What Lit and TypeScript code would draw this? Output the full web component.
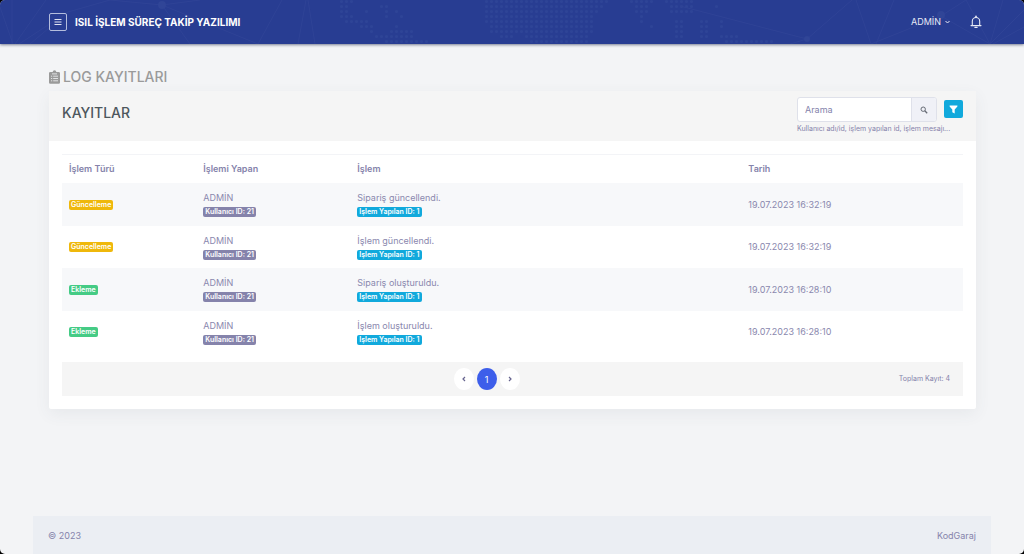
import { LitElement, html, css, svg } from "lit";
import { customElement, property, state } from "lit/decorators.js";
import { classMap } from "lit/directives/class-map.js";

interface LogEntry {
  kind: "update" | "insert";
  user: string;
  userId: number;
  message: string;
  targetId: number;
  date: string;
}

const ENTRIES: LogEntry[] = [
  { kind: "update", user: "ADMİN", userId: 21, message: "Sipariş güncellendi.", targetId: 1, date: "19.07.2023 16:32:19" },
  { kind: "update", user: "ADMİN", userId: 21, message: "İşlem güncellendi.", targetId: 1, date: "19.07.2023 16:32:19" },
  { kind: "insert", user: "ADMİN", userId: 21, message: "Sipariş oluşturuldu.", targetId: 1, date: "19.07.2023 16:28:10" },
  { kind: "insert", user: "ADMİN", userId: 21, message: "İşlem oluşturuldu.", targetId: 1, date: "19.07.2023 16:28:10" },
];

const KIND_LABEL = { update: "Güncelleme", insert: "Ekleme" };

const base = css`
  * {
    box-sizing: border-box;
  }
  button,
  input {
    font: inherit;
    margin: 0;
  }
  button {
    cursor: pointer;
  }
  svg {
    display: block;
  }
`;

@customElement("top-bar")
export class TopBar extends LitElement {
  @property() heading = "";
  @property() user = "";

  static styles = [
    base,
    css`
      :host {
        display: block;
        position: relative;
        background: #283d92;
        color: #fff;
        border-radius: 5px 5px 0 0;
        box-shadow: 0 1px 3px rgba(40, 50, 80, 0.6);
      }
      .map {
        position: absolute;
        inset: 0;
        width: 100%;
        height: 100%;
      }
      .bar {
        position: relative;
        display: flex;
        align-items: center;
        height: 44px;
        padding: 0 42px 0 49px;
      }
      .menu {
        display: grid;
        place-items: center;
        width: 18px;
        height: 18px;
        padding: 0;
        border: 1px solid #b4bddd;
        border-radius: 2px;
        background: none;
        color: #dfe3f2;
      }
      .title {
        margin: 0 auto 0 8px;
        font-size: 10px;
        font-weight: 700;
        line-height: 16px;
      }
      .user {
        display: flex;
        align-items: center;
        gap: 3px;
        padding: 0;
        border: 0;
        background: none;
        color: #e6e9f5;
        font-size: 9px;
        line-height: 16px;
      }
      .bell {
        margin-left: 19px;
        padding: 0;
        border: 0;
        background: none;
        color: #e6e9f5;
      }
    `,
  ];

  render() {
    const dots = (x: number, y: number, w: number, h: number) =>
      svg`<rect x=${x} y=${y} width=${w} height=${h} fill="url(#dots)" />`;
    return html`
      <svg class="map" viewBox="0 0 1024 44" preserveAspectRatio="none" aria-hidden="true">
        <defs>
          <pattern id="dots" width="5" height="5" patternUnits="userSpaceOnUse">
            <circle cx="1.5" cy="1.5" r="1.5" fill="#2e4497" />
          </pattern>
        </defs>
        ${dots(340, 0, 15, 5)} ${dots(340, 5, 10, 10)} ${dots(340, 15, 15, 5)}
        ${dots(345, 20, 15, 5)} ${dots(360, 20, 10, 10)} ${dots(365, 10, 5, 5)}
        ${dots(370, 25, 5, 10)} ${dots(380, 5, 10, 5)} ${dots(385, 10, 5, 10)}
        ${dots(395, 10, 5, 5)} ${dots(400, 15, 5, 5)} ${dots(395, 25, 5, 5)}
        ${dots(375, 35, 40, 5)} ${dots(385, 40, 45, 5)} ${dots(390, 30, 25, 5)}
        ${dots(485, 0, 125, 5)} ${dots(485, 5, 120, 5)} ${dots(485, 10, 115, 5)} ${dots(485, 15, 110, 10)}
        ${dots(490, 25, 105, 10)} ${dots(500, 35, 15, 5)} ${dots(525, 35, 65, 5)} ${dots(530, 40, 60, 5)}
        ${dots(630, 0, 25, 5)} ${dots(635, 5, 15, 10)} ${dots(640, 15, 5, 10)} ${dots(650, 25, 5, 5)}
        ${dots(665, 0, 30, 5)} ${dots(670, 5, 25, 10)} ${dots(675, 20, 10, 20)} ${dots(700, 20, 10, 20)}
        ${dots(715, 5, 5, 5)} ${dots(720, 20, 5, 10)} ${dots(720, 35, 20, 5)} ${dots(725, 40, 50, 5)}
        <g fill="none" stroke="#2f4396" stroke-width="1">
          <path d="M0 7 13 44M12 0V44M46 0 15 44M19 44 68 12 110 0M68 12 30 44M110 0 162 5 190 44" />
          <path d="M162 5 258 44 282 0M298 44 306 0M315 44 308 0M162 5 200 0" />
          <path d="M680 6 807 39 852 0M856 0 871 44M876 44 894 0M871 44 941 16 966 0M807 39 790 44" />
          <path d="M941 16 990 44 966 0M990 44 1003 0M990 44 1024 10M993 44 1024 27" />
        </g>
        <g fill="#304597">
          <circle cx="162" cy="5" r="4" />
          <circle cx="807" cy="39" r="3" />
          <circle cx="941" cy="15" r="4" />
        </g>
      </svg>
      <div class="bar">
        <button class="menu" aria-label="Menü">
          <svg width="8" height="8" viewBox="0 0 8 8" stroke="currentColor" fill="none">
            <path d="M0.5 1.5h7M0.5 4h7M0.5 6.5h7" />
          </svg>
        </button>
        <h1 class="title">${this.heading}</h1>
        <button class="user">
          ${this.user}
          <svg width="7" height="6" viewBox="0 0 7 6" stroke="currentColor" fill="none">
            <path d="M1.5 2 3.5 4 5.5 2" />
          </svg>
        </button>
        <button class="bell" aria-label="Bildirimler">
          <svg width="12" height="14" viewBox="0 0 12 14" stroke="currentColor" fill="none" stroke-width="1.1">
            <path d="M2.3 10.3V6.2a3.7 3.7 0 0 1 7.4 0v4.1" />
            <path d="M1 10.6h10" stroke-linecap="round" />
            <path d="M6 2.2V1.3" stroke-width="1.6" stroke-linecap="round" />
            <path d="M5 12.4h2" stroke-width="1.4" stroke-linecap="round" />
          </svg>
        </button>
      </div>
    `;
  }
}

@customElement("log-table")
export class LogTable extends LitElement {
  @property({ attribute: false }) entries: LogEntry[] = [];

  static styles = [
    base,
    css`
      :host {
        display: block;
      }
      table {
        width: 100%;
        border-collapse: separate;
        border-spacing: 0;
        table-layout: fixed;
        border-top: 1px solid #f3f4f7;
      }
      .kind {
        width: 14.9%;
      }
      .who {
        width: 17.1%;
      }
      .date {
        width: 24.6%;
      }
      th,
      td {
        padding: 0 7px;
        text-align: left;
        vertical-align: middle;
        font-size: 9px;
        line-height: 12px;
      }
      th {
        height: 28px;
        color: #8583ab;
        font-weight: 600;
      }
      td {
        height: 42px;
        color: #8a88ae;
      }
      tbody tr:nth-child(odd) td {
        height: 43px;
        background: #f7f8fa;
      }
      .cell {
        display: flex;
        flex-direction: column;
        align-items: flex-start;
        gap: 3px;
      }
      .badge {
        display: block;
        width: fit-content;
        padding: 0 2px;
        border-radius: 2px;
        color: #fff;
        font-size: 7px;
        font-weight: 600;
        line-height: 10px;
      }
      .update {
        background: #efb80b;
      }
      .insert {
        background: #45cb85;
      }
      .muted {
        background: #8583ab;
      }
      .info {
        background: #11a9dc;
      }
    `,
  ];

  render() {
    return html`
      <table>
        <thead>
          <tr>
            <th class="kind" scope="col">İşlem Türü</th>
            <th class="who" scope="col">İşlemi Yapan</th>
            <th scope="col">İşlem</th>
            <th class="date" scope="col">Tarih</th>
          </tr>
        </thead>
        <tbody>
          ${this.entries.map(
            (e) => html`
              <tr>
                <td><span class=${classMap({ badge: true, [e.kind]: true })}>${KIND_LABEL[e.kind]}</span></td>
                <td>
                  <div class="cell">${e.user}<span class="badge muted">Kullanıcı ID: ${e.userId}</span></div>
                </td>
                <td>
                  <div class="cell">${e.message}<span class="badge info">İşlem Yapılan ID: ${e.targetId}</span></div>
                </td>
                <td>${e.date}</td>
              </tr>
            `
          )}
        </tbody>
      </table>
    `;
  }
}

@customElement("app-root")
export class AppRoot extends LitElement {
  @state() private entries = ENTRIES;

  static styles = [
    base,
    css`
      :host {
        display: block;
        background: #000;
        font-family: Inter, "Liberation Sans", sans-serif;
        font-size: 9px;
        color: #8583ab;
      }
      .page {
        display: flex;
        flex-direction: column;
        min-height: 100vh;
        background: #f3f4f6;
        border-radius: 5px;
      }
      main {
        flex: 1;
        padding: 24px 48px 24px 49px;
      }
      .heading {
        display: flex;
        align-items: center;
        gap: 3px;
        margin: 0 0 5px;
        color: #9a9a9a;
        font-size: 14px;
        font-weight: 500;
        line-height: 18px;
      }
      .card {
        background: #fff;
        border-radius: 2px;
        box-shadow: 0 5px 16px rgba(69, 85, 100, 0.07);
      }
      .card-head {
        display: flex;
        align-items: flex-start;
        justify-content: space-between;
        padding: 6px 13px;
        background: #f5f5f5;
      }
      .card-title {
        margin: 7px 0 0;
        color: #4d575d;
        font-size: 14px;
        font-weight: 500;
        line-height: 18px;
      }
      .tools {
        display: flex;
        align-items: flex-start;
        gap: 7px;
      }
      .search {
        display: flex;
        width: 140px;
        height: 25px;
        border: 1px solid #dfe1ea;
        border-radius: 3px;
        overflow: hidden;
        background: #fff;
      }
      .search input {
        flex: 1;
        min-width: 0;
        padding: 0 7px;
        border: 0;
        outline: 0;
        background: none;
        color: #8583ab;
      }
      .search input::placeholder {
        color: #8583ab;
        opacity: 1;
      }
      .search button {
        display: grid;
        place-items: center;
        width: 25px;
        padding: 0;
        border: 0;
        border-left: 1px solid #dfe1ea;
        background: #f0f1f7;
        color: #666b75;
      }
      .hint {
        display: block;
        height: 12px;
        width: 140px;
        margin-top: 1px;
        font-size: 7px;
        line-height: 12px;
        white-space: nowrap;
      }
      .filter {
        display: grid;
        place-items: center;
        width: 19px;
        height: 18px;
        margin-top: 3px;
        padding: 0;
        border: 0;
        border-radius: 2px;
        background: #11a9dc;
        color: #fff;
      }
      .card-body {
        padding: 13px;
      }
      .pager {
        display: grid;
        grid-template-columns: 1fr auto 1fr;
        align-items: center;
        height: 34px;
        margin-top: 9px;
        padding: 0 13px;
        background: #f5f5f5;
      }
      .pages {
        grid-column: 2;
        display: flex;
        gap: 3px;
        margin-right: 52px;
      }
      .pages button {
        display: grid;
        place-items: center;
        width: 20px;
        height: 22px;
        padding: 0;
        border: 0;
        border-radius: 50%;
        background: #fff;
        color: #66648f;
      }
      .pages .current {
        background: #3d5eea;
        color: #fff;
      }
      .total {
        justify-self: end;
        font-size: 7px;
        line-height: 12px;
      }
      footer {
        display: flex;
        align-items: center;
        justify-content: space-between;
        height: 38px;
        margin: 0 33px;
        padding: 0 15px;
        background: #ebeef3;
      }
    `,
  ];

  render() {
    return html`
      <div class="page">
        <top-bar heading="ISIL İŞLEM SÜREÇ TAKİP YAZILIMI" user="ADMİN"></top-bar>
        <main>
          <h2 class="heading">
            <svg width="11" height="14" viewBox="0 0 11 14">
              <path
                fill="currentColor"
                d="M1.3 2h2.4a1.8 1.8 0 0 1 3.6 0h2.4A1.3 1.3 0 0 1 11 3.300V12.500A1.300 1.300 0 0 1 9.700 13.800H1.300A1.300 1.300 0 0 1 0 12.500V3.300A1.300 1.300 0 0 1 1.300 2Z"
              />
              <path
                stroke="#f3f4f6"
                stroke-width="0.8"
                d="M3 3.900h5M2 6.200h1.200M4.200 6.200H9M2 8.500h1.200M4.200 8.500H9M2 10.800h1.200M4.200 10.800H9"
              />
            </svg>
            LOG KAYITLARI
          </h2>
          <section class="card">
            <header class="card-head">
              <h3 class="card-title">KAYITLAR</h3>
              <div class="tools">
                <form @submit=${(ev: Event) => ev.preventDefault()}>
                  <div class="search">
                    <input type="text" placeholder="Arama" aria-label="Arama" aria-describedby="hint" />
                    <button aria-label="Ara">
                      <svg width="8" height="8" viewBox="0 0 8 8" fill="none" stroke="currentColor">
                        <circle cx="3.2" cy="3.2" r="2.200" />
                        <path d="M4.800 4.800 7.200 7.200" stroke-width="1.300" />
                      </svg>
                    </button>
                  </div>
                  <small class="hint" id="hint">Kullanıcı adı/id, işlem yapılan id, işlem mesajı...</small>
                </form>
                <button class="filter" aria-label="Filtrele">
                  <svg width="9" height="9" viewBox="0 0 9 9">
                    <path fill="currentColor" d="M0.600 0.500H8.400V1.600L5.700 4.500V8.500L3.300 7.200V4.500L0.600 1.600Z" />
                  </svg>
                </button>
              </div>
            </header>
            <div class="card-body">
              <log-table .entries=${this.entries}></log-table>
              <div class="pager">
                <nav class="pages" aria-label="Sayfalar">
                  <button aria-label="Önceki">
                    <svg width="6" height="6" viewBox="0 0 6 6" fill="none" stroke="currentColor" stroke-width="1.200">
                      <path d="M4 1 2 3 4 5" />
                    </svg>
                  </button>
                  <button class="current" aria-current="page">1</button>
                  <button aria-label="Sonraki">
                    <svg width="6" height="6" viewBox="0 0 6 6" fill="none" stroke="currentColor" stroke-width="1.200">
                      <path d="M2 1 4 3 2 5" />
                    </svg>
                  </button>
                </nav>
                <span class="total">Toplam Kayıt: ${this.entries.length}</span>
              </div>
            </div>
          </section>
        </main>
        <footer><span>© 2023</span><span>KodGaraj</span></footer>
      </div>
    `;
  }
}
